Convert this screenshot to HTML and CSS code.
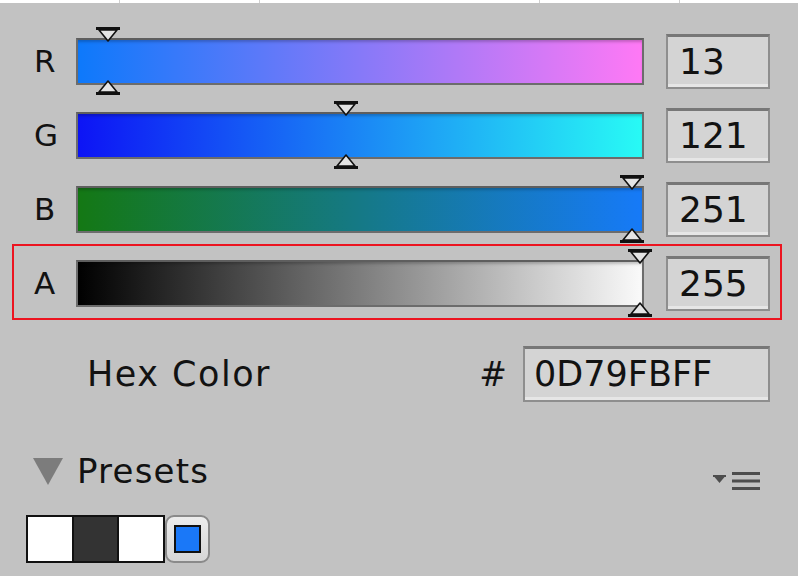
FILE: index.html
```html
<!DOCTYPE html>
<html>
<head>
<meta charset="utf-8">
<link rel="stylesheet" href="styles.css">
</head>
<body>
<div class="topline"><span></span><span></span><span></span><span></span><span></span></div>

<section class="sliders">
  <div class="row">
    <div class="label">R</div>
    <div class="bar bar-r">
      <svg class="thumb thumb-top" style="left:30px" viewBox="0 0 26 16"><rect x="1" y="0" width="24" height="3" fill="#111"/><path d="M4 3 L22 3 L13 14 Z" fill="#e4e4e4" stroke="#111" stroke-width="1.6" stroke-linejoin="round"/></svg>
      <svg class="thumb thumb-bottom" style="left:30px" viewBox="0 0 26 16"><rect x="1" y="13" width="24" height="3" fill="#111"/><path d="M4 13 L22 13 L13 2 Z" fill="#e4e4e4" stroke="#111" stroke-width="1.6" stroke-linejoin="round"/></svg>
    </div>
    <div class="num">13</div>
  </div>
  <div class="row">
    <div class="label">G</div>
    <div class="bar bar-g">
      <svg class="thumb thumb-top" style="left:267.5px" viewBox="0 0 26 16"><rect x="1" y="0" width="24" height="3" fill="#111"/><path d="M4 3 L22 3 L13 14 Z" fill="#e4e4e4" stroke="#111" stroke-width="1.6" stroke-linejoin="round"/></svg>
      <svg class="thumb thumb-bottom" style="left:267.5px" viewBox="0 0 26 16"><rect x="1" y="13" width="24" height="3" fill="#111"/><path d="M4 13 L22 13 L13 2 Z" fill="#e4e4e4" stroke="#111" stroke-width="1.6" stroke-linejoin="round"/></svg>
    </div>
    <div class="num">121</div>
  </div>
  <div class="row">
    <div class="label">B</div>
    <div class="bar bar-b">
      <svg class="thumb thumb-top" style="left:553.5px" viewBox="0 0 26 16"><rect x="1" y="0" width="24" height="3" fill="#111"/><path d="M4 3 L22 3 L13 14 Z" fill="#e4e4e4" stroke="#111" stroke-width="1.6" stroke-linejoin="round"/></svg>
      <svg class="thumb thumb-bottom" style="left:553.5px" viewBox="0 0 26 16"><rect x="1" y="13" width="24" height="3" fill="#111"/><path d="M4 13 L22 13 L13 2 Z" fill="#e4e4e4" stroke="#111" stroke-width="1.6" stroke-linejoin="round"/></svg>
    </div>
    <div class="num">251</div>
  </div>
  <div class="row row-highlight">
    <div class="label">A</div>
    <div class="bar bar-a">
      <svg class="thumb thumb-top" style="left:562px" viewBox="0 0 26 16"><rect x="1" y="0" width="24" height="3" fill="#111"/><path d="M4 3 L22 3 L13 14 Z" fill="#e4e4e4" stroke="#111" stroke-width="1.6" stroke-linejoin="round"/></svg>
      <svg class="thumb thumb-bottom" style="left:562px" viewBox="0 0 26 16"><rect x="1" y="13" width="24" height="3" fill="#111"/><path d="M4 13 L22 13 L13 2 Z" fill="#e4e4e4" stroke="#111" stroke-width="1.6" stroke-linejoin="round"/></svg>
    </div>
    <div class="num">255</div>
  </div>
</section>

<div class="hex">
  <div class="hex-label">Hex Color</div>
  <div class="hash">#</div>
  <div class="hex-box">0D79FBFF</div>
</div>

<div class="presets-head">
  <span class="tri"></span>
  <span class="presets-title">Presets</span>
  <svg class="menu-icon" viewBox="0 0 48 20"><rect x="1" y="4" width="13" height="2" fill="#4d4d4d"/><path d="M2.5 6 L12.5 6 L7.5 12 Z" fill="#4d4d4d"/><rect x="20" y="1" width="28" height="3" fill="#4d4d4d"/><rect x="20" y="8.5" width="28" height="3" fill="#4d4d4d"/><rect x="20" y="16" width="28" height="3" fill="#4d4d4d"/></svg>
</div>

<div class="swatches">
  <div class="strip">
    <span class="cell cell-white"></span>
    <span class="cell cell-dark"></span>
    <span class="cell cell-white"></span>
  </div>
  <div class="preset-btn"><span class="preset-color"></span></div>
</div>
</body>
</html>
```

FILE: styles.css
```css
html, body {
  margin: 0;
  padding: 0;
}
body {
  width: 798px;
  height: 576px;
  overflow: hidden;
  background: #c2c2c2;
  font-family: "DejaVu Sans", "Open Sans", sans-serif;
  color: #121212;
}

.topline {
  height: 3px;
  background: #fff;
  display: grid;
  grid-template-columns: 120px 140px 280px 140px 1fr;
}
.topline span {
  border-right: 1px solid #d0d0d0;
}
.topline span:last-child {
  border-right: none;
}

.sliders {
  margin: 21px 0 0 12px;
  width: 770px;
}
.row {
  display: grid;
  grid-template-columns: 64px 568px 126px;
  align-items: center;
  height: 74px;
}
.row-highlight {
  position: relative;
}
.row-highlight::after {
  content: "";
  position: absolute;
  left: 0;
  right: 0;
  top: -2px;
  bottom: 0;
  border: 2px solid #ec1420;
  pointer-events: none;
}
.label {
  padding-left: 22px;
  font-size: 31px;
  line-height: 1;
}
.bar {
  position: relative;
  height: 47px;
  box-sizing: border-box;
  border: 2px solid #6c6c6c;
  border-top-color: #5e5e5e;
}
.bar::before {
  content: "";
  position: absolute;
  inset: 0;
  box-shadow: inset 0 3px 3px -1px rgba(0,0,0,0.22);
}
.bar-r { background: linear-gradient(90deg, rgb(13,121,251), rgb(255,121,245)); }
.bar-g { background: linear-gradient(90deg, rgb(13,20,245), rgb(40,250,245)); }
.bar-b { background: linear-gradient(90deg, rgb(20,120,20), rgb(22,122,248)); }
.bar-a { background: linear-gradient(90deg, #000, #fafafa); }

.thumb {
  position: absolute;
  width: 26px;
  height: 16px;
  margin-left: -13px;
  z-index: 2;
}
.thumb-top { top: -13px; }
.thumb-bottom { bottom: -12px; }

.num {
  margin-left: 22px;
  height: 55px;
  box-sizing: border-box;
  border: 2px solid #8e8e8e;
  border-top: 3px solid #777;
  background: #d4d4d4;
  box-shadow: inset 0 -3px 0 #e6e6e6;
  font-size: 36px;
  line-height: 50px;
  padding-left: 11px;
}

.hex {
  display: flex;
  align-items: center;
  height: 56px;
  margin: 26px 28px 0 87px;
}
.hex-label {
  flex: 1;
  font-size: 35px;
  letter-spacing: 1.5px;
}
.hash {
  font-size: 33px;
  margin-right: 16px;
}
.hex-box {
  width: 247px;
  height: 56px;
  box-sizing: border-box;
  border: 2px solid #8e8e8e;
  border-top: 3px solid #777;
  background: #d4d4d4;
  box-shadow: inset 0 -3px 0 #e6e6e6;
  font-size: 35px;
  line-height: 50px;
  padding-left: 9px;
}

.presets-head {
  display: flex;
  align-items: center;
  height: 42px;
  margin: 48px 38px 0 33px;
}
.tri {
  width: 0;
  height: 0;
  border-left: 15px solid transparent;
  border-right: 15px solid transparent;
  border-top: 27px solid #7c7c7c;
  margin-right: 14px;
}
.presets-title {
  flex: 1;
  font-size: 34px;
  letter-spacing: 1.2px;
}
.menu-icon {
  width: 48px;
  height: 20px;
  margin-top: 20px;
}

.swatches {
  display: flex;
  margin: 23px 0 0 26px;
}
.strip {
  display: flex;
  height: 48px;
  box-sizing: border-box;
  border: 2px solid #111;
}
.cell {
  width: 44px;
  height: 44px;
}
.cell-dark {
  width: 43px;
  background: #333;
  border-left: 2px solid #111;
  border-right: 2px solid #111;
}
.cell-white {
  background: #fff;
}
.preset-btn {
  width: 45px;
  height: 48px;
  box-sizing: border-box;
  border: 2px solid #8a8a8a;
  border-radius: 9px;
  background: linear-gradient(#ececec, #d6d6d6);
  display: flex;
  align-items: center;
  justify-content: center;
}
.preset-color {
  width: 27px;
  height: 28px;
  box-sizing: border-box;
  border: 2px solid #111;
  background: #1a78f8;
}
```
